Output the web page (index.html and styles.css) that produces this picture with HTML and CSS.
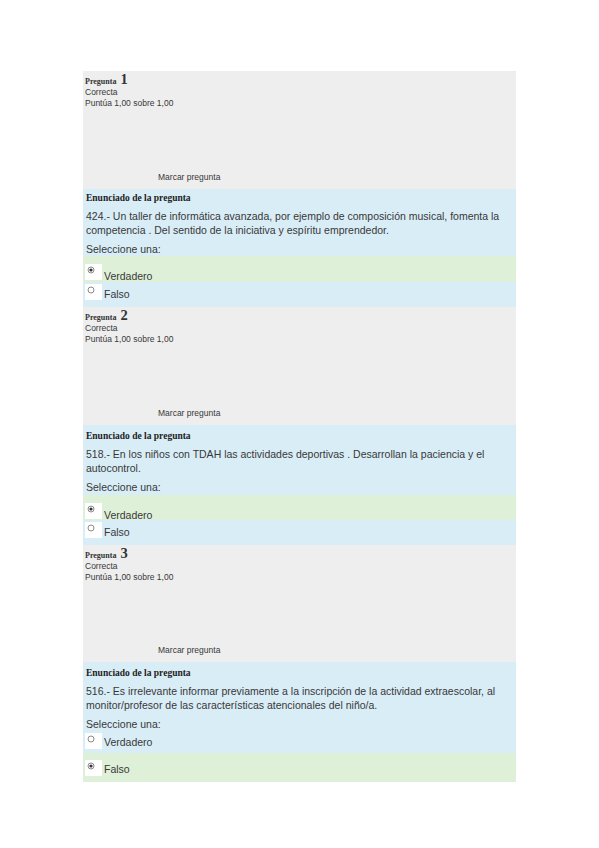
FILE: index.html
```html
<!DOCTYPE html>
<html lang="es">
<head>
<meta charset="utf-8">
<title>Preguntas</title>
<link rel="stylesheet" href="styles.css">
</head>
<body>
<div class="page">

  <div class="que">
    <div class="info">
      <div class="qno"><span class="qlabel">Pregunta</span> <span class="qnum">1</span></div>
      <div class="state">Correcta</div>
      <div class="grade">Puntúa 1,00 sobre 1,00</div>
      <div class="flag">Marcar pregunta</div>
    </div>
    <div class="content">
      <div class="formulation">
        <div class="heading">Enunciado de la pregunta</div>
        <div class="qtext">424.- Un taller de informática avanzada, por ejemplo de composición musical, fomenta la competencia . Del sentido de la iniciativa y espíritu emprendedor.</div>
        <div class="prompt">Seleccione una:</div>
      </div>
      <div class="answer correct a-low">
        <span class="rbox"><svg width="8" height="8" viewBox="0 0 8 8"><circle cx="4" cy="4" r="3" fill="#fff" stroke="#8a8a8a" stroke-width="1"/><circle cx="4" cy="4" r="1.6" fill="#333"/></svg></span>
        <span class="label">Verdadero</span>
      </div>
      <div class="answer a-high">
        <span class="rbox"><svg width="8" height="8" viewBox="0 0 8 8"><circle cx="4" cy="4" r="3" fill="#fff" stroke="#8a8a8a" stroke-width="1"/></svg></span>
        <span class="label">Falso</span>
      </div>
    </div>
  </div>

  <div class="que">
    <div class="info">
      <div class="qno"><span class="qlabel">Pregunta</span> <span class="qnum">2</span></div>
      <div class="state">Correcta</div>
      <div class="grade">Puntúa 1,00 sobre 1,00</div>
      <div class="flag">Marcar pregunta</div>
    </div>
    <div class="content">
      <div class="formulation f-loose">
        <div class="heading">Enunciado de la pregunta</div>
        <div class="qtext">518.- En los niños con TDAH las actividades deportivas . Desarrollan la paciencia y el autocontrol.</div>
        <div class="prompt">Seleccione una:</div>
      </div>
      <div class="answer correct a-low a-25">
        <span class="rbox"><svg width="8" height="8" viewBox="0 0 8 8"><circle cx="4" cy="4" r="3" fill="#fff" stroke="#8a8a8a" stroke-width="1"/><circle cx="4" cy="4" r="1.6" fill="#333"/></svg></span>
        <span class="label">Verdadero</span>
      </div>
      <div class="answer a-high">
        <span class="rbox"><svg width="8" height="8" viewBox="0 0 8 8"><circle cx="4" cy="4" r="3" fill="#fff" stroke="#8a8a8a" stroke-width="1"/></svg></span>
        <span class="label">Falso</span>
      </div>
    </div>
  </div>

  <div class="que">
    <div class="info info-short">
      <div class="qno"><span class="qlabel">Pregunta</span> <span class="qnum">3</span></div>
      <div class="state">Correcta</div>
      <div class="grade">Puntúa 1,00 sobre 1,00</div>
      <div class="flag">Marcar pregunta</div>
    </div>
    <div class="content">
      <div class="formulation f-loose f-tight-bottom">
        <div class="heading">Enunciado de la pregunta</div>
        <div class="qtext">516.- Es irrelevante informar previamente a la inscripción de la actividad extraescolar, al monitor/profesor de las características atencionales del niño/a.</div>
        <div class="prompt">Seleccione una:</div>
      </div>
      <div class="answer a-compact">
        <span class="rbox"><svg width="8" height="8" viewBox="0 0 8 8"><circle cx="4" cy="4" r="3" fill="#fff" stroke="#8a8a8a" stroke-width="1"/></svg></span>
        <span class="label">Verdadero</span>
      </div>
      <div class="answer correct a-tall">
        <span class="rbox"><svg width="8" height="8" viewBox="0 0 8 8"><circle cx="4" cy="4" r="3" fill="#fff" stroke="#8a8a8a" stroke-width="1"/><circle cx="4" cy="4" r="1.6" fill="#333"/></svg></span>
        <span class="label">Falso</span>
      </div>
    </div>
  </div>

</div>
</body>
</html>
```
FILE: styles.css
```css
html, body {
  margin: 0;
  padding: 0;
  background: #ffffff;
}

.page {
  padding: 71px 0 40px 83px;
  font-family: "Liberation Sans", Arial, sans-serif;
  color: #383838;
}

.que {
  width: 433px;
}

.info {
  background: #eeeeee;
  height: 118px;
  box-sizing: border-box;
  padding: 1px 2px 7px 2px;
  display: flex;
  flex-direction: column;
}

.info-short {
  height: 117px;
}

.qno {
  font-family: "Liberation Serif", "Times New Roman", serif;
  font-weight: bold;
  line-height: 14px;
  height: 14px;
  color: #333;
}

.qlabel {
  font-size: 8px;
}

.qnum {
  font-size: 14.5px;
}

.state,
.grade {
  font-size: 8.5px;
  line-height: 10.5px;
}

.state {
  margin-top: 1px;
}

.flag {
  margin-top: auto;
  padding-left: 73px;
  font-size: 8.5px;
  line-height: 10px;
}

.content {
  background: #d9edf7;
}

.formulation {
  padding: 3px 3px 0 3px;
}

.formulation.f-loose {
  padding-top: 5px;
  padding-bottom: 1px;
}

.formulation.f-tight-bottom {
  padding-bottom: 0;
}

.heading {
  font-family: "Liberation Serif", "Times New Roman", serif;
  font-weight: bold;
  font-size: 9.5px;
  line-height: 12px;
  color: #222;
}

.qtext {
  margin-top: 5px;
  font-size: 10.5px;
  line-height: 14px;
}

.prompt {
  margin-top: 5px;
  font-size: 10.5px;
  line-height: 14px;
}

.answer {
  display: flex;
  align-items: flex-start;
  box-sizing: border-box;
  padding-left: 2px;
}

.answer.correct {
  background: #dff0d8;
}

.answer.a-low {
  height: 26px;
  padding-top: 8px;
}

.answer.a-low.a-25 {
  height: 25px;
}

.answer.a-low .label {
  margin-top: 5px;
}

.answer.a-high {
  height: 25px;
  padding-top: 2px;
}

.answer.a-high .label {
  margin-top: 3px;
}

.answer.a-compact {
  height: 22px;
  padding-top: 2px;
}

.answer.a-compact .label {
  margin-top: 2px;
}

.answer.a-tall {
  height: 29px;
  padding-top: 7px;
}

.answer.a-tall .label {
  margin-top: 2px;
}

.rbox {
  width: 17px;
  height: 16px;
  background: #ffffff;
  box-sizing: border-box;
  padding: 2px 0 0 2px;
  display: block;
  flex: none;
}

.rbox svg {
  display: block;
}

.label {
  margin-left: 2px;
  font-size: 10.5px;
  line-height: 14px;
}
```
